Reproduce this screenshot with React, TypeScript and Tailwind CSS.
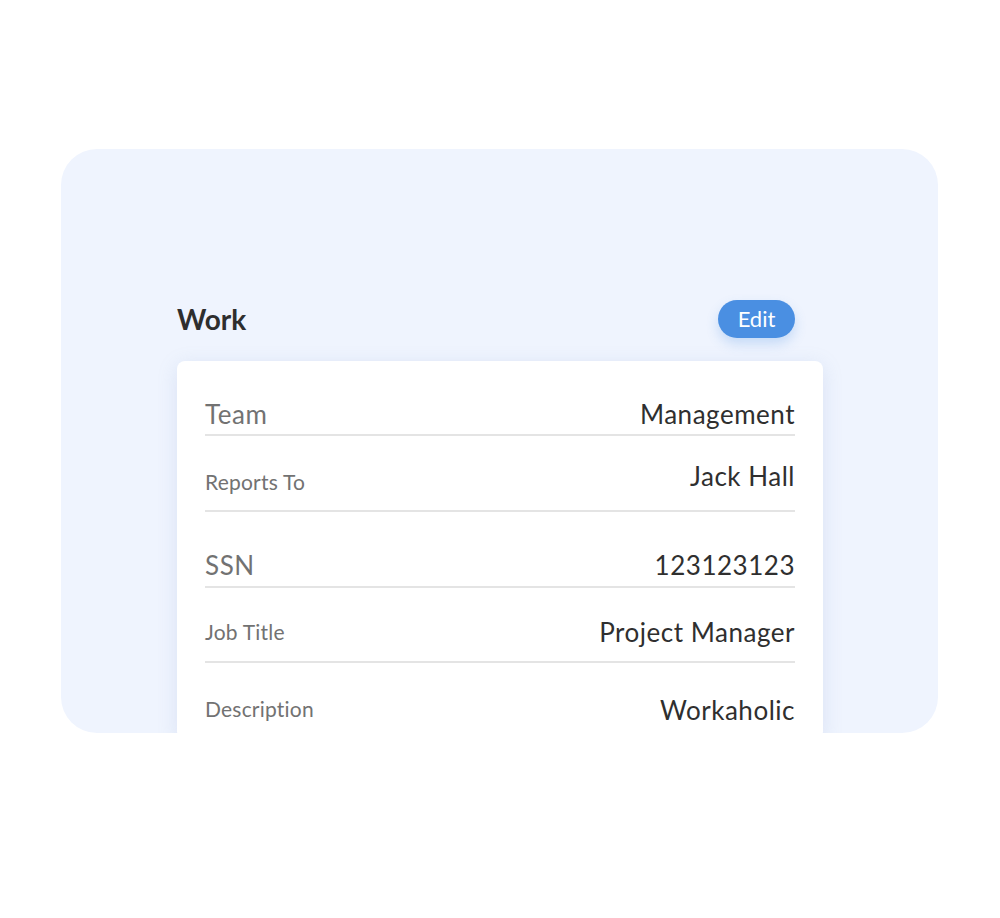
const rows = [
  { label: "Team", value: "Management", big: true, h: "h-[75px]", lpb: "pb-[5px]", vpb: "pb-[5px]", border: true },
  { label: "Reports To", value: "Jack Hall", big: false, h: "h-[76px]", lpb: "pb-[15px]", vpb: "pb-[19px]", border: true },
  { label: "SSN", value: "123123123", big: true, h: "h-[76px]", lpb: "pb-[6px]", vpb: "pb-[6px]", border: true },
  { label: "Job Title", value: "Project Manager", big: false, h: "h-[75px]", lpb: "pb-[16px]", vpb: "pb-[14px]", border: true },
  { label: "Description", value: "Workaholic", big: false, h: "h-[76px]", lpb: "pb-[17px]", vpb: "pb-[14px]", border: false },
];

export default function App() {
  return (
    <div className="min-h-[918px] w-[1000px] bg-white pt-[149px] pl-[61px] font-['Lato','Open_Sans',sans-serif]">
      <div className="h-[584px] w-[877px] overflow-hidden rounded-[36px] bg-[#eff4fe] pl-[116px] pr-[115px] pt-[151px]">
        <div className="flex h-[38px] w-[618px] items-center justify-between">
          <h2 className="text-[28px] font-bold leading-none text-[#2e2e2e]">Work</h2>
          <button className="h-[38px] w-[77px] rounded-full bg-[#4a8fe2] text-[22px] leading-none text-white shadow-[0_6px_12px_rgba(74,143,226,0.25)]">
            Edit
          </button>
        </div>
        <div className="mt-[23px] rounded-[8px] bg-white px-[28px] shadow-[0_4px_20px_rgba(120,150,200,0.18)]">
          {rows.map((r) => (
            <div
              key={r.label}
              className={`flex items-end justify-between ${r.h} ${r.border ? "border-b-2 border-[#e4e4e4]" : ""}`}
            >
              <span
                className={`${r.lpb} text-[#727272] ${r.big ? "text-[26px] leading-[30px] tracking-[0.02em]" : "text-[21px] leading-[26px] tracking-[0.01em]"}`}
              >
                {r.label}
              </span>
              <span className={`${r.vpb} text-[26px] leading-[30px] tracking-[0.02em] text-[#2f2f2f]`}>
                {r.value}
              </span>
            </div>
          ))}
        </div>
      </div>
    </div>
  );
}
